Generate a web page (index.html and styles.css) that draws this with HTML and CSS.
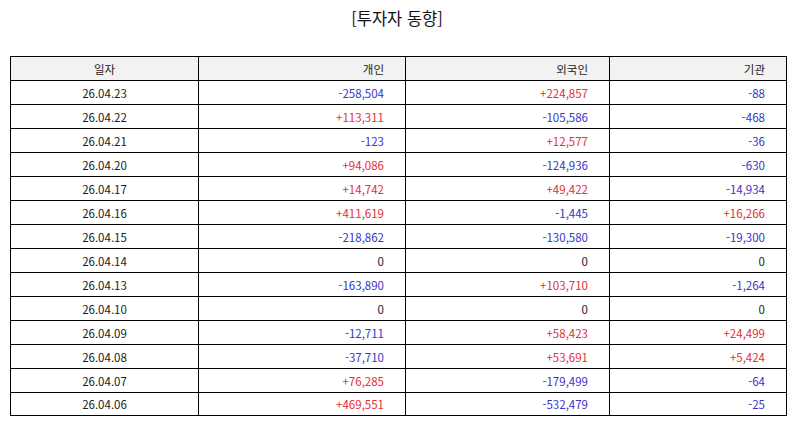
FILE: index.html
```html
<!DOCTYPE html>
<html lang="ko">
<head>
<meta charset="utf-8">
<link rel="stylesheet" href="styles.css">
</head>
<body>
<h1 class="title">[투자자 동향]</h1>
<table class="grid">
  <colgroup>
    <col class="c-date"><col class="c-ind"><col class="c-for"><col class="c-inst">
  </colgroup>
  <thead>
    <tr><th class="center">일자</th><th>개인</th><th>외국인</th><th>기관</th></tr>
  </thead>
  <tbody>
    <tr><td class="center">26.04.23</td><td class="dn">-258,504</td><td class="up">+224,857</td><td class="dn">-88</td></tr>
    <tr><td class="center">26.04.22</td><td class="up">+113,311</td><td class="dn">-105,586</td><td class="dn">-468</td></tr>
    <tr><td class="center">26.04.21</td><td class="dn">-123</td><td class="up">+12,577</td><td class="dn">-36</td></tr>
    <tr><td class="center">26.04.20</td><td class="up">+94,086</td><td class="dn">-124,936</td><td class="dn">-630</td></tr>
    <tr><td class="center">26.04.17</td><td class="up">+14,742</td><td class="up">+49,422</td><td class="dn">-14,934</td></tr>
    <tr><td class="center">26.04.16</td><td class="up">+411,619</td><td class="dn">-1,445</td><td class="up">+16,266</td></tr>
    <tr><td class="center">26.04.15</td><td class="dn">-218,862</td><td class="dn">-130,580</td><td class="dn">-19,300</td></tr>
    <tr><td class="center">26.04.14</td><td>0</td><td>0</td><td>0</td></tr>
    <tr><td class="center">26.04.13</td><td class="dn">-163,890</td><td class="up">+103,710</td><td class="dn">-1,264</td></tr>
    <tr><td class="center">26.04.10</td><td>0</td><td>0</td><td>0</td></tr>
    <tr><td class="center">26.04.09</td><td class="dn">-12,711</td><td class="up">+58,423</td><td class="up">+24,499</td></tr>
    <tr><td class="center">26.04.08</td><td class="dn">-37,710</td><td class="up">+53,691</td><td class="up">+5,424</td></tr>
    <tr><td class="center">26.04.07</td><td class="up">+76,285</td><td class="dn">-179,499</td><td class="dn">-64</td></tr>
    <tr><td class="center">26.04.06</td><td class="up">+469,551</td><td class="dn">-532,479</td><td class="dn">-25</td></tr>
  </tbody>
</table>
</body>
</html>
```
FILE: styles.css
```css
html, body {
  margin: 0;
  padding: 0;
  background: #fff;
}
body {
  font-family: "Noto Sans CJK KR", "Noto Sans", sans-serif;
  color: #222;
}
.title {
  margin: 0 0 28px 0;
  padding-top: 8px;
  font-size: 16.5px;
  line-height: 20px;
  font-weight: normal;
  text-align: center;
  color: #111;
}
.grid {
  margin: 0 0 0 10px;
  width: 776px;
  border-collapse: collapse;
  table-layout: fixed;
  border: 1px solid #000;
  font-size: 11.5px;
}
.c-date { width: 188px; }
.c-ind { width: 207px; }
.c-for { width: 204px; }
.c-inst { width: 177px; }
.grid th, .grid td {
  border: 1px solid #000;
  height: 23px;
  padding: 0 21px 0 4px;
  text-align: right;
  font-weight: normal;
  line-height: 14px;
  color: #222;
}
.grid tbody tr:last-child td {
  height: 22px;
}
.grid th {
  background: #f2f2f2;
}
.grid .center {
  text-align: center;
  padding: 0;
}
.grid .up { color: #e62e35; }
.grid .dn { color: #3636c8; }
```
